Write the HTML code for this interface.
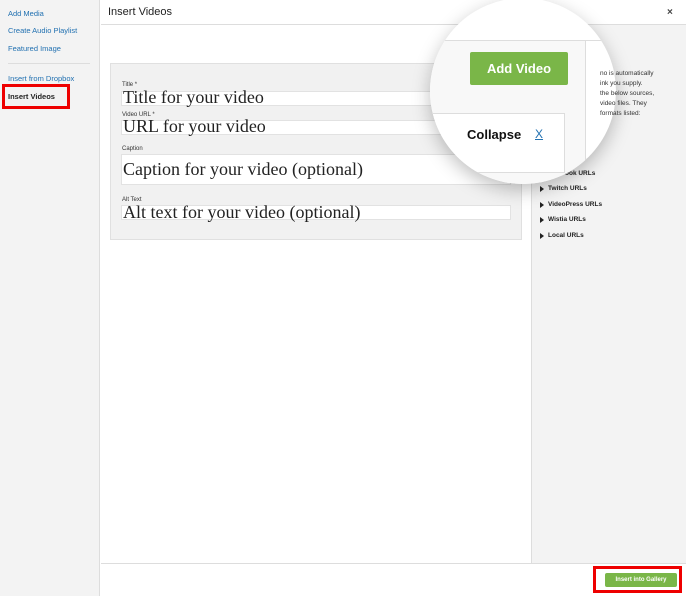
<!DOCTYPE html>
<html><head><style>
*{margin:0;padding:0;box-sizing:border-box}
body{width:686px;height:596px;position:relative;overflow:hidden;background:#fff;font-family:"Liberation Sans",sans-serif}
.a{position:absolute}
.side{left:0;top:0;width:100px;height:596px;background:#f3f3f3;border-right:1px solid #ddd}
.side div{position:absolute;left:8px;font-size:7.5px;color:#2271b1}
.lbl{font-size:6px;color:#333;position:absolute;left:122px}
.inp{position:absolute;left:121px;width:390px;background:#fff;border:1px solid #e2e2e2}
.tx{position:absolute;left:123px;font-family:"Liberation Serif",serif;font-size:18px;color:#222;line-height:17px;white-space:nowrap}
.rs div{position:absolute;left:548px;font-size:6.5px;font-weight:bold;color:#222}
.rs div:before{content:"";position:absolute;left:-8px;top:1px;border-left:4px solid #222;border-top:3px solid transparent;border-bottom:3px solid transparent}
</style></head><body>
<div class="a side">
<div style="top:9px">Add Media</div>
<div style="top:26px">Create Audio Playlist</div>
<div style="top:44px">Featured Image</div>
<div class="a" style="left:8px;top:63px;width:82px;height:1px;background:#ddd"></div>
<div style="top:74px">Insert from Dropbox</div>
<div style="top:92px;color:#222;font-weight:bold">Insert Videos</div>
</div>
<div class="a" style="left:2px;top:84px;width:68px;height:25px;border:3px solid #e00"></div>
<div class="a" style="left:101px;top:0;width:585px;height:25px;border-bottom:1px solid #ddd"></div>
<div class="a" style="left:108px;top:6px;font-size:11px;color:#222">Insert Videos</div>
<div class="a" style="left:667px;top:7px;font-size:10px;font-weight:bold;color:#444">×</div>
<div class="a" style="left:531px;top:25px;width:155px;height:538px;background:#f3f3f3;border-left:1px solid #ddd"></div>
<div class="a" style="left:110px;top:63px;width:412px;height:177px;background:#f1f1f1;border:1px solid #e0e0e0"></div>
<div class="lbl" style="top:82px">Title *</div>
<div class="inp" style="top:91px;height:15px"></div>
<div class="tx" style="top:89px">Title for your video</div>
<div class="lbl" style="top:112px">Video URL *</div>
<div class="inp" style="top:120px;height:15px"></div>
<div class="tx" style="top:118px">URL for your video</div>
<div class="lbl" style="top:146px">Caption</div>
<div class="inp" style="top:154px;height:31px"></div>
<div class="tx" style="top:161px">Caption for your video (optional)</div>
<div class="lbl" style="top:197px">Alt Text</div>
<div class="inp" style="top:205px;height:15px"></div>
<div class="tx" style="top:204px">Alt text for your video (optional)</div>
<div class="rs">
<div style="top:154px;left:575px">RLs</div>
<div style="top:170px;left:565px">ook URLs</div>
<div style="top:185px">Twitch URLs</div>
<div style="top:201px">VideoPress URLs</div>
<div style="top:216px">Wistia URLs</div>
<div style="top:232px">Local URLs</div>
</div>
<div class="a" style="left:430px;top:-2px;width:186px;height:186px;border-radius:50%;background:#fff;box-shadow:0 6px 18px rgba(0,0,0,.25);overflow:hidden">
 <div class="a" style="left:0;top:42px;width:186px;height:1px;background:#ddd"></div>
 <div class="a" style="left:155px;top:42px;width:1px;height:150px;background:#ddd"></div>
 <div class="a" style="left:0;top:43px;width:155px;height:150px;background:#f8f8f8"></div>
 <div class="a" style="left:40px;top:54px;width:98px;height:33px;background:#7ab648;border-radius:2px;color:#fff;font-weight:bold;font-size:13px;text-align:center;line-height:33px">Add Video</div>
 <div class="a" style="left:0;top:115px;width:135px;height:60px;background:#fff;border:1px solid #ddd"></div>
 <div class="a" style="left:37px;top:129px;font-size:13px;font-weight:bold;color:#111">Collapse</div>
 <div class="a" style="left:105px;top:129px;font-size:12px;color:#2271b1;text-decoration:underline">X</div>
</div>
<div class="a" style="left:600px;top:69px;font-size:6.5px;color:#333;line-height:10px">no is automatically<br>ink you supply.<br>the below sources,<br>video files. They<br>formats listed:</div>
<div class="a" style="left:101px;top:563px;width:585px;height:33px;border-top:1px solid #ddd;background:#fff"></div>
<div class="a" style="left:593px;top:566px;width:89px;height:27px;border:3px solid #e00"></div>
<div class="a" style="left:605px;top:573px;width:72px;height:14px;background:#7ab648;border-radius:2px;color:#fff;font-size:6px;font-weight:bold;text-align:center;line-height:14px">Insert into Gallery</div>
</body></html>
